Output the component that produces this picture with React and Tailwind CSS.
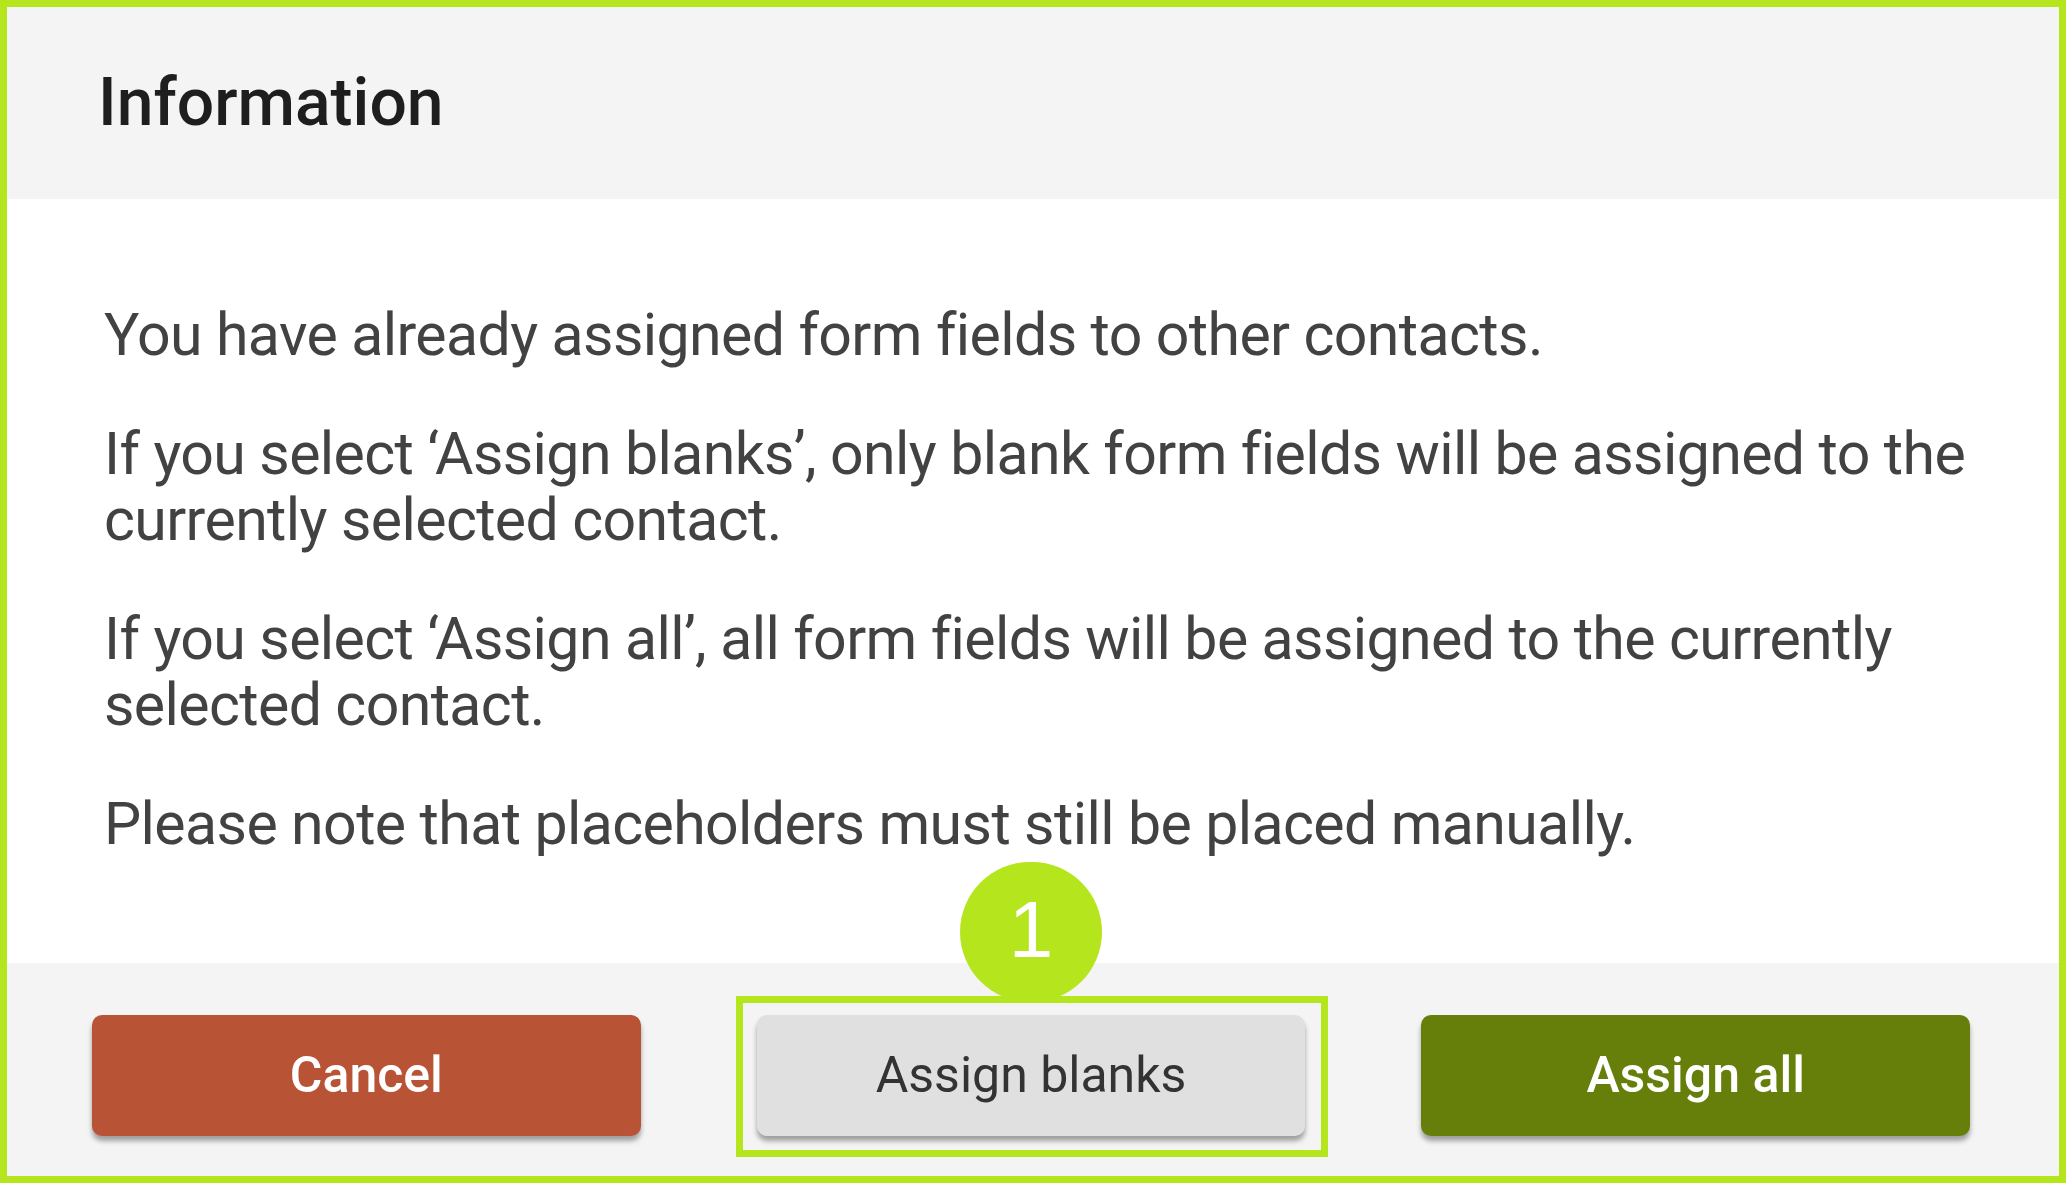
export default function App() {
  return (
    <div className="w-[2066px] h-[1183px] border-[7px] border-[#b5e61d] flex flex-col bg-white overflow-hidden">
      {/* Header */}
      <div className="h-[192px] shrink-0 bg-[#f4f4f4] flex items-center pl-[91px]">
        <h1 className="text-[66px] font-medium text-[#1e1e1e] font-['Roboto',sans-serif] leading-none">
          Information
        </h1>
      </div>

      {/* Body */}
      <div className="flex-1 pt-[103px] pl-[97px] pr-[90px] text-[59px] tracking-[-0.6px] leading-[66px] text-[#424242] font-['Roboto',sans-serif] flex flex-col gap-[53px]">
        <p>You have already assigned form fields to other contacts.</p>
        <p>
          If you select ‘Assign blanks’, only blank form fields will be assigned to the
          currently selected contact.
        </p>
        <p>
          If you select ‘Assign all’, all form fields will be assigned to the currently
          selected contact.
        </p>
        <p>Please note that placeholders must still be placed manually.</p>
      </div>

      {/* Footer */}
      <div className="h-[213px] shrink-0 bg-[#f4f4f4] flex items-start gap-[116px] pl-[85px] pr-[89px] pt-[52px] font-['Roboto',sans-serif]">
        <button className="flex-1 h-[121px] rounded-[10px] bg-[#b85335] text-white text-[50px] font-medium shadow-[0_5px_5px_rgba(0,0,0,0.35)]">
          Cancel
        </button>
        <div className="relative flex-1">
          <button className="w-full h-[121px] rounded-[10px] bg-[#e0e0e0] text-[#333333] text-[50px] shadow-[0_5px_5px_rgba(0,0,0,0.35)]">
            Assign blanks
          </button>
          <div className="absolute -left-[21px] -right-[23px] -top-[19px] -bottom-[21px] border-[7px] border-[#b5e61d] pointer-events-none"></div>
          <div className="absolute left-1/2 -translate-x-1/2 -top-[153px] w-[142px] h-[140px] rounded-full bg-[#b5e61d] flex items-center justify-center text-white text-[80px] font-['Liberation_Sans',sans-serif] leading-none pb-[4px]">
            1
          </div>
        </div>
        <button className="flex-1 h-[121px] rounded-[10px] bg-[#667f0a] text-white text-[50px] font-medium shadow-[0_5px_5px_rgba(0,0,0,0.35)]">
          Assign all
        </button>
      </div>
    </div>
  );
}
